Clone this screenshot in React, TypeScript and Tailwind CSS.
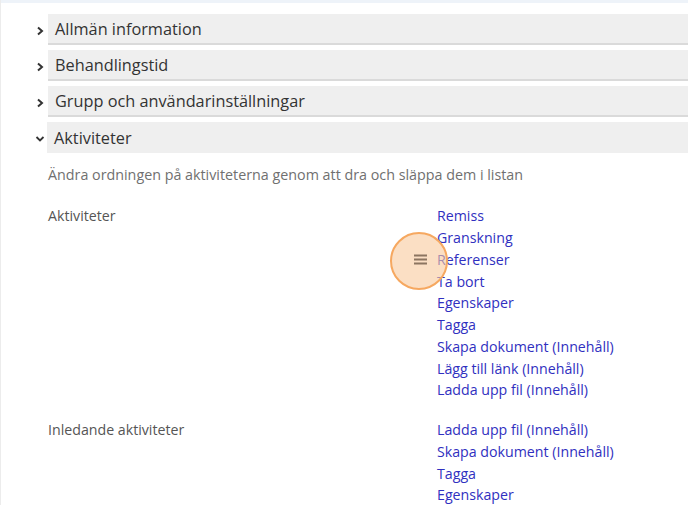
import React from "react";

const sections = ["Allmän information", "Behandlingstid", "Grupp och användarinställningar"];
const acts = [
  "Remiss",
  "Granskning",
  "Referenser",
  "Ta bort",
  "Egenskaper",
  "Tagga",
  "Skapa dokument (Innehåll)",
  "Lägg till länk (Innehåll)",
  "Ladda upp fil (Innehåll)",
];
const initial = ["Ladda upp fil (Innehåll)", "Skapa dokument (Innehåll)", "Tagga", "Egenskaper"];

function Right() {
  return (
    <svg width="8" height="10" viewBox="0 0 8 10" className="shrink-0">
      <path d="M2 1.5 L6 5 L2 8.5" fill="none" stroke="#333" strokeWidth="2" />
    </svg>
  );
}
function Down() {
  return (
    <svg width="10" height="8" viewBox="0 0 10 8" className="shrink-0">
      <path d="M1.5 2 L5 5.5 L8.5 2" fill="none" stroke="#333" strokeWidth="1.8" />
    </svg>
  );
}

export default function App() {
  return (
    <div
      className="w-[688px] h-[505px] overflow-hidden bg-white border-l border-[#ececec]"
      style={{ fontFamily: '"Open Sans", "Noto Sans", sans-serif' }}
    >
      <div className="h-[3px] bg-[#eef3f9]" />
      <div className="pt-[11px] pl-[35px]">
        <div className="flex flex-col gap-[5px]">
          {sections.map((s) => (
            <div key={s} className="flex items-center">
              <div className="w-[12px] flex justify-start pt-[2px]">
                <Right />
              </div>
              <div className="flex-1 h-[31px] bg-[#efefef] border-b-2 border-[#dadada] flex items-center pl-[7px] pt-[2px] text-[16.3px] text-[#333]">
                {s}
              </div>
            </div>
          ))}
          <div className="flex items-center">
            <div className="w-[12px] flex justify-start -ml-[1px] pt-[2px]">
              <Down />
            </div>
            <div className="flex-1 h-[31px] bg-[#efefef] flex items-center pl-[7px] pt-[1px] text-[16.3px] text-[#333]">
              Aktiviteter
            </div>
          </div>
        </div>
        <div className="pl-[12px] pt-[11px] text-[14.3px] text-[#707070]">
          Ändra ordningen på aktiviteterna genom att dra och släppa dem i listan
        </div>
        <div className="pl-[12px] pt-[20px] grid grid-cols-[389px_1fr] text-[14.2px] leading-[21.75px]">
          <div className="text-[#555]">Aktiviteter</div>
          <div className="relative flex flex-col text-[#3030c0]">
            {acts.map((a, i) => (
              <div key={i}>{a}</div>
            ))}
            <div className="absolute left-[-47px] top-[27px] w-[58px] h-[58px] rounded-full border-2 border-[#f6a860] bg-[#f8c99c]/60 flex items-center justify-center">
              <svg width="13" height="11" viewBox="0 0 13 11" className="ml-[2px] -mt-[4px]">
                <rect x="0" y="0.5" width="13" height="2" fill="#8c7560" />
                <rect x="0" y="4.5" width="13" height="2" fill="#8c7560" />
                <rect x="0" y="8.5" width="13" height="2" fill="#8c7560" />
              </svg>
            </div>
          </div>
          <div className="col-span-2 h-[18px]" />
          <div className="text-[#555]">Inledande aktiviteter</div>
          <div className="flex flex-col text-[#3030c0]">
            {initial.map((a, i) => (
              <div key={i}>{a}</div>
            ))}
          </div>
        </div>
      </div>
    </div>
  );
}
